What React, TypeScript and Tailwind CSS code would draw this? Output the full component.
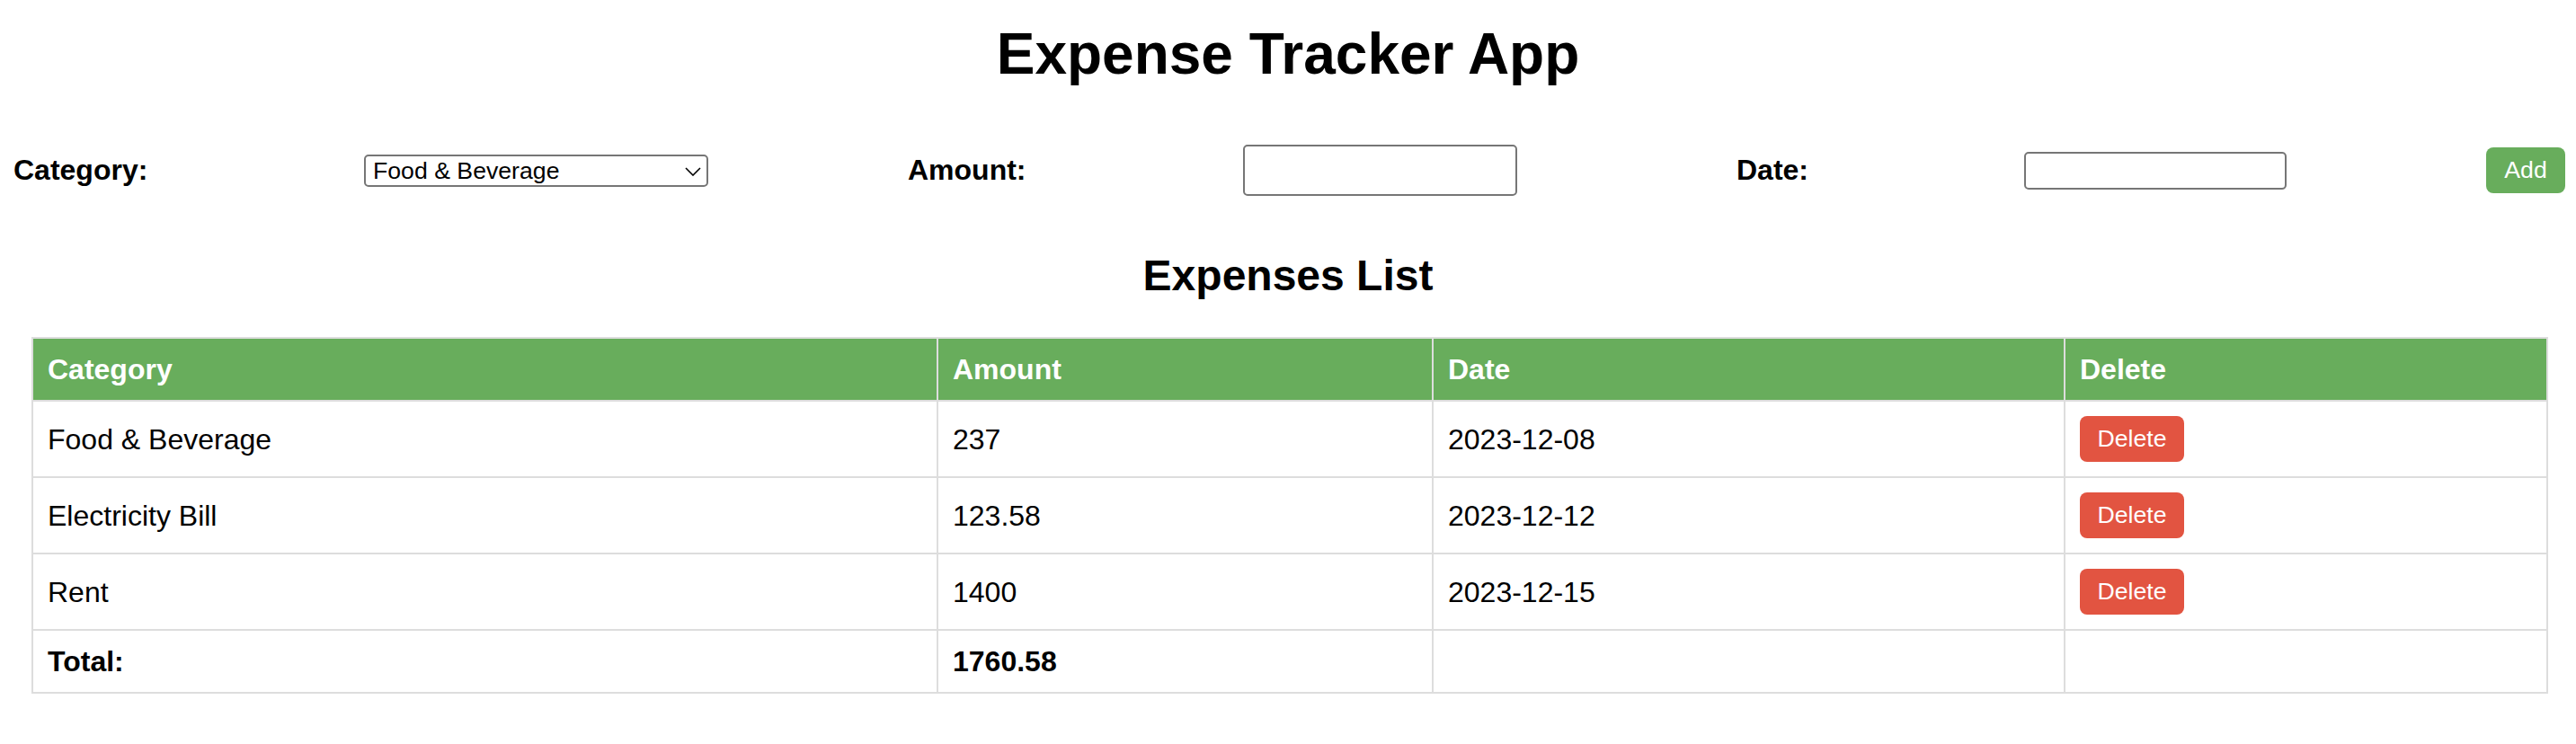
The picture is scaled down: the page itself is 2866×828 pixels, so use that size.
import React from "react";

const rows = [
  { category: "Food & Beverage", amount: "237", date: "2023-12-08" },
  { category: "Electricity Bill", amount: "123.58", date: "2023-12-12" },
  { category: "Rent", amount: "1400", date: "2023-12-15" },
];

export default function App() {
  return (
    <div className="min-h-[828px] w-[2866px] bg-white text-black font-['Liberation_Sans',Arial,Helvetica,sans-serif]">
      <h1 className="pt-[23px] text-center text-[64px] font-bold leading-[74px]">
        Expense Tracker App
      </h1>

      <div className="mt-[64px] flex h-[57px] items-center pl-[15px]">
        <div className="w-[390px] shrink-0">
          <label className="text-[32px] font-bold leading-[37px]">Category:</label>
        </div>
        <div className="relative w-[383px] shrink-0">
          <select
            defaultValue="Food & Beverage"
            className="block h-[36px] w-[383px] appearance-none rounded-[5px] border-2 border-[#767676] bg-white pl-[8px] text-[26.67px] leading-[30px] text-black outline-none"
          >
            <option>Food & Beverage</option>
            <option>Electricity Bill</option>
            <option>Rent</option>
          </select>
          <svg
            className="pointer-events-none absolute right-[8px] top-[14px]"
            width="18"
            height="10"
            viewBox="0 0 18 10"
            fill="none"
          >
            <polyline points="1,1 9,9 17,1" stroke="#000" strokeWidth="1.6" />
          </svg>
        </div>
        <div className="ml-[222px] w-[373px] shrink-0">
          <label className="text-[32px] font-bold leading-[37px]">Amount:</label>
        </div>
        <input
          type="text"
          className="h-[57px] w-[305px] shrink-0 rounded-[5px] border-2 border-[#767676] bg-white outline-none"
        />
        <div className="ml-[244px] w-[320px] shrink-0">
          <label className="text-[32px] font-bold leading-[37px]">Date:</label>
        </div>
        <input
          type="text"
          className="h-[42px] w-[292px] shrink-0 rounded-[5px] border-2 border-[#767676] bg-white outline-none"
        />
        <button className="ml-[222px] h-[51px] w-[88px] shrink-0 rounded-[8px] bg-[#68ad5c] text-[26.67px] leading-[31px] text-white">
          Add
        </button>
      </div>

      <h2 className="mt-[61px] text-center text-[48px] font-bold leading-[55px]">Expenses List</h2>

      <table className="ml-[35px] mt-[41px] w-[2798px] table-fixed border-collapse border-2 border-[#ddd] text-[32px]">
        <thead>
          <tr>
            <th className="w-[1007px] border-2 border-[#ddd] bg-[#68ad5c] px-[16px] py-[16px] text-left font-bold leading-[36px] text-white">
              Category
            </th>
            <th className="w-[551px] border-2 border-[#ddd] bg-[#68ad5c] px-[16px] py-[16px] text-left font-bold leading-[36px] text-white">
              Amount
            </th>
            <th className="w-[703px] border-2 border-[#ddd] bg-[#68ad5c] px-[16px] py-[16px] text-left font-bold leading-[36px] text-white">
              Date
            </th>
            <th className="w-[537px] border-2 border-[#ddd] bg-[#68ad5c] px-[16px] py-[16px] text-left font-bold leading-[36px] text-white">
              Delete
            </th>
          </tr>
        </thead>
        <tbody>
          {rows.map((r) => (
            <tr key={r.category}>
              <td className="border-2 border-[#ddd] px-[16px] py-[16px] align-middle leading-[36px]">{r.category}</td>
              <td className="border-2 border-[#ddd] px-[16px] py-[16px] align-middle leading-[36px]">{r.amount}</td>
              <td className="border-2 border-[#ddd] px-[16px] py-[16px] align-middle leading-[36px]">{r.date}</td>
              <td className="border-2 border-[#ddd] px-[16px] py-[16px] align-middle leading-[36px]">
                <button className="block h-[51px] w-[116px] rounded-[8px] bg-[#e25441] text-[26.67px] leading-[31px] text-white">
                  Delete
                </button>
              </td>
            </tr>
          ))}
          <tr>
            <td className="border-2 border-[#ddd] px-[16px] py-[16px] align-middle font-bold leading-[36px]">Total:</td>
            <td className="border-2 border-[#ddd] px-[16px] py-[16px] align-middle font-bold leading-[36px]">1760.58</td>
            <td className="border-2 border-[#ddd] px-[16px] py-[16px] align-middle leading-[36px]"></td>
            <td className="border-2 border-[#ddd] px-[16px] py-[16px] align-middle leading-[36px]"></td>
          </tr>
        </tbody>
      </table>
    </div>
  );
}
